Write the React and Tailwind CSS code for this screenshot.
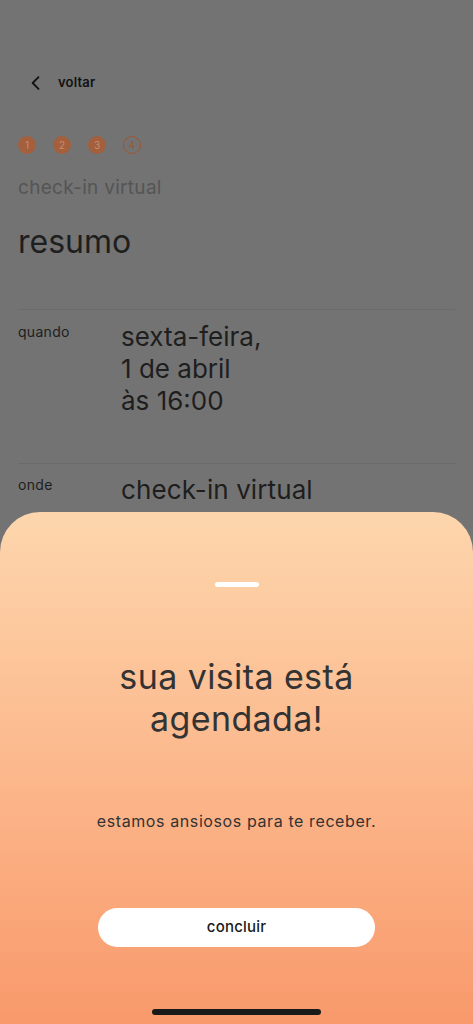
import React from 'react';

export default function App() {
  return (
    <div className="relative w-full h-[1024px] overflow-hidden bg-[#737373] font-['Inter','Noto_Sans',sans-serif]">
      {/* Page behind the sheet (dimmed) */}
      <div className="flex flex-col px-[18px] pt-[70px]">
        <div className="flex items-center gap-[12px] pl-[8px] h-[26px]">
          <svg width="20" height="20" viewBox="0 0 24 24" fill="none" stroke="#111" strokeWidth="2.2" strokeLinecap="round" strokeLinejoin="round">
            <path d="M15 5l-7 7 7 7" />
          </svg>
          <span className="text-[13px] font-semibold text-[#111] tracking-[0.2px]">voltar</span>
        </div>

        <div className="flex items-center gap-[17px] mt-[40px]">
          {[1, 2, 3].map((n) => (
            <div key={n} className="w-[18px] h-[18px] rounded-full bg-[#a45f3d] flex items-center justify-center text-[10px] text-[#c98d70]">
              {n}
            </div>
          ))}
          <div className="w-[18px] h-[18px] rounded-full border-[1.5px] border-[#9e5633] flex items-center justify-center text-[10px] text-[#9e5633]">
            4
          </div>
        </div>

        <div className="mt-[21px] text-[19px] text-[#555555] leading-[26px] tracking-[0.3px]">check-in virtual</div>
        <div className="mt-[22px] text-[32px] text-[#1e1e1e] leading-[38px]">resumo</div>

        <div className="mt-[48px] h-px bg-[#6b6b6b]" />
        <div className="flex pt-[11px] h-[153px]">
          <div className="w-[103px] text-[14px] text-[#1e1e1e] leading-[20px] pt-[1px] tracking-[0.3px]">quando</div>
          <div className="text-[26px] text-[#1e1e1e] leading-[32px]">
            sexta-feira,<br />1 de abril<br />às 16:00
          </div>
        </div>
        <div className="h-px bg-[#6b6b6b]" />
        <div className="flex pt-[10px]">
          <div className="w-[103px] text-[14px] text-[#1e1e1e] leading-[20px] pt-[1px] tracking-[0.3px]">onde</div>
          <div className="text-[26px] text-[#1e1e1e] leading-[32px] tracking-[0.1px]">check-in virtual</div>
        </div>
      </div>

      {/* Bottom sheet */}
      <div className="absolute left-0 right-0 bottom-0 h-[512px] rounded-t-[40px] bg-gradient-to-b from-[#fdd6ad] to-[#f8996b] flex flex-col items-center">
        <div className="mt-[70px] w-[44px] h-[5px] rounded-full bg-white" />
        <h1 className="mt-[69px] text-[34px] leading-[42px] text-[#333333] text-center font-normal tracking-[0.4px]">
          sua visita está<br />agendada!
        </h1>
        <p className="mt-[70px] text-[16px] text-[#333333] leading-[22px] tracking-[0.6px]">estamos ansiosos para te receber.</p>
        <button className="mt-[76px] w-[277px] h-[39px] rounded-full bg-white text-[15px] font-medium text-[#1a1a1a] tracking-[0.2px]">
          concluir
        </button>
        <div className="mt-auto mb-[9px] w-[169px] h-[6px] rounded-full bg-[#1a1a1a]" />
      </div>
    </div>
  );
}
